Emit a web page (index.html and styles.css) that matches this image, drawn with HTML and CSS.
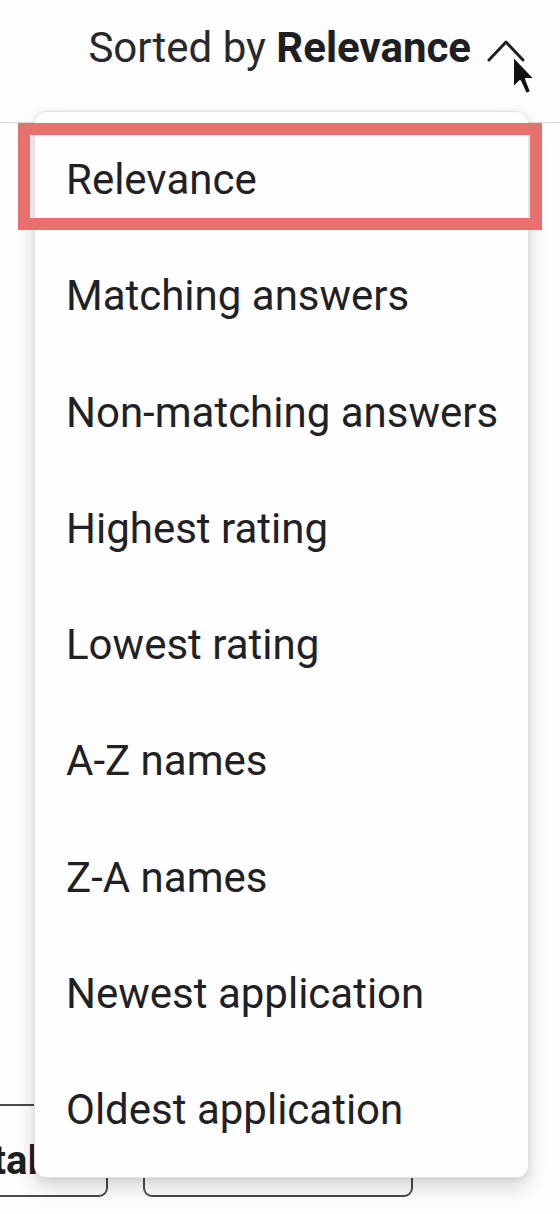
FILE: index.html
```html
<!DOCTYPE html>
<html>
<head>
<meta charset="utf-8">
<link rel="stylesheet" href="styles.css">
</head>
<body>
<div class="page">
  <header class="topbar">
    <div class="sort">
      <span class="sort-label">Sorted by <b>Relevance</b></span>
      <svg class="chev" width="40" height="30" viewBox="0 0 40 30"><path d="M3 24 L20 6 L37 24" fill="none" stroke="#1d1f22" stroke-width="3" stroke-linecap="round" stroke-linejoin="round"/></svg>
    </div>
  </header>
  <div class="content">
    <div class="btn btn-left"><span>Total</span></div>
    <div class="btn btn-mid"></div>
  </div>

  <ul class="menu">
    <li>Relevance</li>
    <li>Matching answers</li>
    <li>Non-matching answers</li>
    <li>Highest rating</li>
    <li>Lowest rating</li>
    <li>A-Z names</li>
    <li>Z-A names</li>
    <li>Newest application</li>
    <li>Oldest application</li>
  </ul>
  <div class="highlight"></div>
  <svg class="cursor" width="30" height="46" viewBox="0 0 30 46"><path d="M4 3 L4 35 L11 28 L17 41 L22 39 L17 26 L26 26 Z" fill="#111" stroke="#fff" stroke-width="2" stroke-linejoin="round"/></svg>
</div>
</body>
</html>
```
FILE: styles.css
```css
* { box-sizing: border-box; }
html, body { margin: 0; padding: 0; }
body {
  background: #fdfdfd;
  font-family: Roboto, "Noto Sans", Arial, sans-serif;
  color: #1f2125;
}
.page {
  position: relative;
  width: 560px;
  height: 1214px;
  overflow: hidden;
}
.topbar {
  height: 123px;
  border-bottom: 1px solid #dcdcdc;
  display: flex;
  justify-content: flex-end;
  padding-right: 34px;
  padding-top: 23px;
}
.sort {
  display: flex;
  align-items: flex-start;
  gap: 15px;
  height: 50px;
}
.sort-label {
  font-size: 42px;
  line-height: 50px;
  color: #27292d;
}
.sort-label b { font-weight: 700; color: #1d1f22; }
.chev { margin-top: 13px; }

.content {
  display: flex;
  gap: 35px;
  padding-top: 981px;
}
.btn {
  height: 93px;
  border: 2px solid #4a4a4a;
  border-radius: 9px;
}
.btn-left {
  width: 150px;
  margin-left: -42px;
  display: flex;
  align-items: center;
  justify-content: flex-end;
  padding-right: 68px;
  font-weight: 700;
  font-size: 40px;
  color: #1d1f22;
}
.btn-left span { margin-top: 20px; }
.btn-mid { width: 270px; }

.menu {
  position: absolute;
  left: 34px;
  top: 111px;
  width: 495px;
  height: 1067px;
  margin: 0;
  padding: 10px 0 0 0;
  list-style: none;
  background: #fefefe;
  border: 1px solid #e2e2e2;
  border-radius: 12px;
  box-shadow: 0 10px 20px rgba(0,0,0,0.14), 0 2px 6px rgba(0,0,0,0.08);
}
.menu li {
  height: 116.3px;
  line-height: 116.3px;
  padding-left: 31px;
  font-size: 42px;
  color: #1f2125;
  white-space: nowrap;
}
.highlight {
  position: absolute;
  left: 18px;
  top: 123px;
  width: 524px;
  height: 107px;
  border: 12px solid #e8706f;
}
.cursor {
  position: absolute;
  left: 509px;
  top: 53px;
}
```
